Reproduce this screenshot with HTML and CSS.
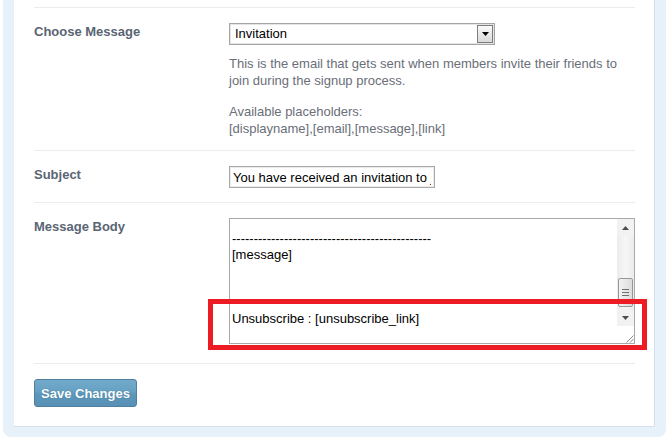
FILE: index.html
```html
<!DOCTYPE html>
<html>
<head>
<meta charset="utf-8">
<link rel="stylesheet" href="styles.css">
</head>
<body>
<div class="frame">
  <div class="panel">
    <div class="divider"></div>
    <div class="row row-msg">
      <div class="label">Choose Message</div>
      <div class="field">
        <div class="select">
          <span class="select-text">Invitation</span>
          <span class="select-btn"><svg width="7" height="4" viewBox="0 0 7 4"><path d="M0 0h7L3.5 4z" fill="#000"/></svg></span>
        </div>
        <p class="desc">This is the email that gets sent when members invite their friends to join during the signup process.</p>
        <p class="desc">Available placeholders:<br>[displayname],[email],[message],[link]</p>
      </div>
    </div>
    <div class="row row-subject">
      <div class="label">Subject</div>
      <div class="field">
        <input class="input" type="text" readonly value="You have received an invitation to join">
      </div>
    </div>
    <div class="row row-body">
      <div class="label">Message Body</div>
      <div class="field">
        <div class="textarea-wrap">
          <div class="textarea">
            <div class="ta-content">
              <div class="ta-line">----------------------------------------------</div>
              <div class="ta-line">[message]</div>
              <div class="ta-line">&nbsp;</div>
              <div class="ta-line">&nbsp;</div>
              <div class="ta-line">&nbsp;</div>
              <div class="ta-line">Unsubscribe : [unsubscribe_link]</div>
            </div>
            <div class="scrollbar">
              <div class="sb-arrow sb-up"><svg width="7" height="4" viewBox="0 0 7 4"><path d="M3.5 0L7 4H0z" fill="#4d4d4d"/></svg></div>
              <div class="sb-track">
                <div class="sb-thumb"><span></span><span></span><span></span></div>
              </div>
              <div class="sb-arrow sb-down"><svg width="7" height="4" viewBox="0 0 7 4"><path d="M0 0h7L3.5 4z" fill="#4d4d4d"/></svg></div>
              <div class="sb-corner"><svg width="9" height="9" viewBox="0 0 9 9"><path d="M8.5 1.5L1.5 8.5M8.5 5L5 8.5" stroke="#8a8a8a" stroke-width="1"/></svg></div>
            </div>
          </div>
          <div class="highlight"></div>
        </div>
      </div>
    </div>
    <div class="actions">
      <button class="btn">Save Changes</button>
    </div>
  </div>
</div>
</body>
</html>
```

FILE: styles.css
```css
html, body {
  margin: 0;
  padding: 0;
  background: #fff;
}
body {
  font-family: "Liberation Sans", Arial, sans-serif;
  font-size: 13px;
}
.frame {
  margin-left: 3px;
  width: 663px;
  box-sizing: border-box;
  background: #e6f1f9;
  padding: 0 11px 10px 11px;
  border-radius: 0 0 8px 8px;
}
.panel {
  background: #fff;
  border-right: 1px solid #d4e1ec;
  border-bottom: 1px solid #d4e1ec;
  padding: 7px 19px 19px 20px;
}
.divider {
  height: 1px;
  background: #ececec;
}
.row {
  display: flex;
  border-bottom: 1px solid #ececec;
  padding-top: 15px;
}
.row-msg { padding-bottom: 13px; }
.row-subject { padding-bottom: 14px; }
.row-body { padding-bottom: 19px; }
.label {
  width: 195px;
  flex: none;
  font-weight: bold;
  color: #5a6573;
  line-height: 17px;
  margin-top: 0;
}
.field {
  flex: 1;
  min-width: 0;
}
.select {
  width: 266px;
  height: 22px;
  box-sizing: border-box;
  border: 1px solid #a5a5a5;
  box-shadow: inset 0 0 0 1px #e4e4e4;
  display: flex;
  align-items: center;
  justify-content: space-between;
  padding: 0 1px 0 5px;
  color: #000;
}
.select-text { line-height: 18px; }
.select-btn {
  width: 14px;
  height: 16px;
  border: 1px solid #7d7d7d;
  background: linear-gradient(#fafafa, #d9d9d9);
  display: flex;
  align-items: center;
  justify-content: center;
}
.desc {
  margin: 10px 0 0 0;
  color: #6a6e78;
  line-height: 17px;
}
.desc + .desc { margin-top: 14px; }
.input {
  display: block;
  margin: 0;
  width: 206px;
  height: 22px;
  box-sizing: border-box;
  border: 1px solid #a9a9a9;
  box-shadow: inset 0 0 0 1px #ececec;
  padding: 0 3px;
  font-family: "Liberation Sans", Arial, sans-serif;
  font-size: 13px;
  color: #000;
  outline: none;
  border-radius: 0;
}
.textarea-wrap {
  position: relative;
  width: 406px;
}
.textarea {
  width: 406px;
  height: 126px;
  box-sizing: border-box;
  border: 1px solid #a9a9a9;
  display: flex;
  overflow: hidden;
}
.ta-content {
  flex: 1;
  padding: 12px 3px 0 2px;
  font-size: 13px;
  line-height: 16px;
  color: #000;
  white-space: nowrap;
  overflow: hidden;
}
.scrollbar {
  width: 17px;
  flex: none;
  display: flex;
  flex-direction: column;
  background: #fff;
}
.sb-arrow {
  height: 17px;
  display: flex;
  align-items: center;
  justify-content: center;
  background: #f2f2f2;
}
.sb-track {
  flex: 1;
  background: linear-gradient(90deg, #ececec, #f6f6f6 50%, #ececec);
  display: flex;
  flex-direction: column;
  justify-content: flex-end;
  padding-bottom: 2px;
}
.sb-thumb {
  margin: 0 1px;
  height: 29px;
  box-sizing: border-box;
  border: 1px solid #979797;
  border-radius: 2px;
  background: linear-gradient(90deg, #f2f2f2, #dcdcdc);
  display: flex;
  flex-direction: column;
  align-items: center;
  justify-content: center;
  gap: 2px;
}
.sb-thumb span {
  display: block;
  width: 7px;
  height: 1px;
  background: #6e6e6e;
}
.sb-corner {
  height: 17px;
  display: flex;
  align-items: flex-end;
  justify-content: flex-end;
  background: #fff;
}
.highlight {
  position: absolute;
  left: -21px;
  top: 81px;
  width: 439px;
  height: 51px;
  box-sizing: border-box;
  border: 5px solid #ed1c24;
}
.actions {
  padding-top: 15px;
}
.btn {
  font-family: "Liberation Sans", Arial, sans-serif;
  font-size: 13px;
  font-weight: bold;
  color: #fff;
  text-shadow: 0 0 1px #3d6f8f;
  width: 103px;
  height: 28px;
  border: 1px solid #4d7f9f;
  border-radius: 3px;
  background: linear-gradient(#73aacb 0%, #65a0c3 45%, #5b96ba 55%, #5891b5 100%);
  padding: 0;
  display: block;
}
```
